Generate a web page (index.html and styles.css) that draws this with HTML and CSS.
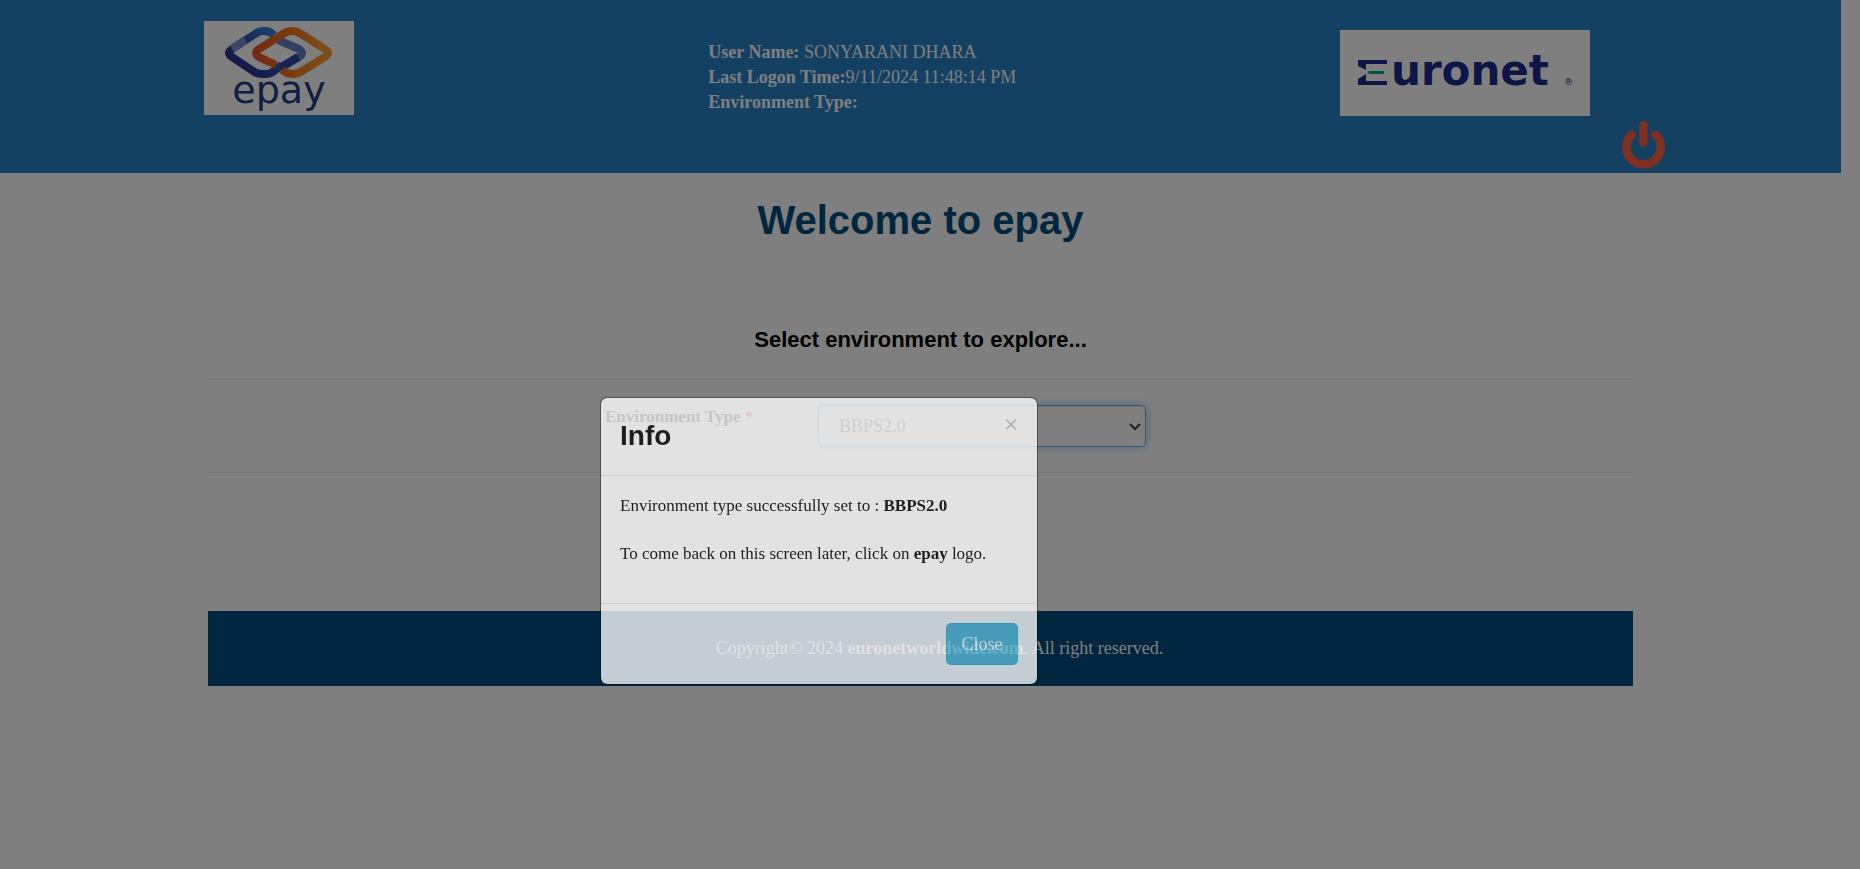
FILE: index.html
```html
<!DOCTYPE html>
<html lang="en">
<head>
<meta charset="utf-8">
<title>epay</title>
<link rel="stylesheet" href="styles.css">
</head>
<body>
<div class="page">
  <header class="header">
    <a class="logo-epay" href="#" aria-label="epay home">
      <svg width="150" height="94" viewBox="0 0 150 94">
        <defs>
          <linearGradient id="blue" x1="0" y1="1" x2="1" y2="0">
            <stop offset="0" stop-color="#24248c"/><stop offset=".45" stop-color="#2c48a4"/><stop offset="1" stop-color="#3090d8"/>
          </linearGradient>
          <linearGradient id="orange" x1="0" y1="0" x2="1" y2="0">
            <stop offset="0" stop-color="#e8502c"/><stop offset=".5" stop-color="#f07a20"/><stop offset="1" stop-color="#f8a03c"/>
          </linearGradient>
        </defs>
        <rect width="150" height="94" fill="#fff"/>
        <g fill="none" stroke-width="8">
          <path d="M70 14Q66 10 61 10H59Q55 10 51 13L28 28Q22 32 28 36L49 50Q53 53 58 53H62Q66 53 70 50L78 44" stroke="url(#blue)"/>
          <path d="M28 28 41 19" stroke="#7b91cc"/>
          <path d="M74 19 95 28Q101 32 95 36L76 47" stroke="#6482c4"/>
          <path d="M94 36 76 47" stroke="#2c48a4"/>
          <path d="M72 44 55 36Q49 32 55 28L79 13Q83 10 88 10Q93 10 97 13L121 28Q127 32 121 36L98 50Q94 53 88 53Q83 53 78 49" stroke="url(#orange)"/>
        </g>
        <text class="epay-word" x="75" y="82" text-anchor="middle">epay</text>
      </svg>
    </a>
    <div class="user">
      <div><b>User Name:</b> SONYARANI DHARA</div>
      <div><b>Last Logon Time:</b>9/11/2024 11:48:14 PM</div>
      <div><b>Environment Type:</b></div>
    </div>
    <div class="logo-euronet">
      <svg width="250" height="86" viewBox="0 0 250 86" role="img" aria-label="Euronet">
        <rect width="250" height="86" fill="#fff"/>
        <path d="M18 30H47V34H26V40L18 36ZM18 55H47V51H26V44L18 49Z" fill="#1c2c90"/>
        <path d="M27 41H44V44H30L27 43L29 42Z" fill="#00a890"/>
        <text class="euronet-word" x="51" y="55">uronet</text>
        <text class="euronet-mark" x="224" y="55">®</text>
      </svg>
    </div>
    <button class="power" aria-label="Log out">
      <svg width="43" height="48" viewBox="0 0 43 48" fill="none" stroke="currentColor" stroke-width="8.600" stroke-linecap="round">
        <path d="M21.500 4.300V21.500M9.600 13.700A17.200 17.200 0 1 0 33.400 13.700"/>
      </svg>
    </button>
  </header>
  <main class="main">
    <h1 class="title">Welcome to epay</h1>
    <h2 class="subtitle">Select environment to explore...</h2>
    <form class="env">
      <label class="env-label" for="env">Environment Type <span class="required">*</span></label>
      <div class="select-wrap">
        <select class="env-select" id="env"><option>BBPS2.0</option></select>
        <svg class="chevron" width="12" height="8" viewBox="0 0 12 8"><path d="M1 1 6 6 11 1" fill="none" stroke="currentColor" stroke-width="2"/></svg>
      </div>
    </form>
    <footer class="footer">Copyright© 2024 <b>euronetworldwide.com</b>. All right reserved.</footer>
  </main>
</div>
<div class="backdrop"></div>
<section class="modal" role="dialog" aria-labelledby="modal-title">
  <div class="modal-header">
    <h3 class="modal-title" id="modal-title">Info</h3>
    <button class="dismiss" aria-label="Dismiss">×</button>
  </div>
  <div class="modal-body">
    <p class="message">Environment type successfully set to : <b>BBPS2.0</b></p>
    <p class="message">To come back on this screen later, click on <b>epay</b> logo.</p>
  </div>
  <div class="modal-footer"><button class="close">Close</button></div>
</section>
</body>
</html>
```
FILE: styles.css
```css
* { box-sizing: border-box; }
body {
  margin: 0;
  background: #fff;
  color: #000;
  font: 18px/25px "Liberation Serif", "Times New Roman", serif;
}
.page { padding-right: 19px; }
button, select { font: inherit; }
.header {
  display: grid;
  grid-template-columns: 504fr 632fr 282fr 219fr;
  align-items: start;
  height: 173px;
  padding-left: 11.1%;
  background: #2882c4;
  color: #fff;
}
.header svg { display: block; }
.logo-epay { margin-top: 21px; }
.epay-word { font: 38px "DejaVu Sans", sans-serif; fill: #203c88; }
.user { margin-top: 40px; }
.logo-euronet { margin-top: 30px; }
.euronet-word { font: bold 42px "DejaVu Sans", sans-serif; fill: #1c2c90; }
.euronet-mark { font: 9px "DejaVu Sans", sans-serif; fill: #1c2c90; }
.power {
  justify-self: start;
  margin-top: 121px;
  padding: 0;
  border: 0;
  background: none;
  color: #fc6044;
}
.main { width: calc(100% - 416px); margin: 0 auto; }
.title, .subtitle {
  margin: 0;
  text-align: center;
  font-family: "Liberation Sans", Arial, sans-serif;
}
.title { padding-top: 23px; font-size: 40px; line-height: 48px; color: #004c80; }
.subtitle { padding-top: 81px; font-size: 22px; line-height: 30px; }
.env {
  display: grid;
  grid-template-columns: 213px 328px;
  align-items: start;
  margin-top: 24px;
  padding: 25px 0 25px 397px;
  border-top: 1px solid #eee;
  border-bottom: 1px solid #eee;
}
.env-label { font-size: 17px; line-height: 24px; font-weight: bold; }
.required { color: #f00; }
.select-wrap { position: relative; }
.env-select {
  display: block;
  width: 100%;
  height: 42px;
  padding: 0 20px;
  appearance: none;
  border: 1px solid #66afe9;
  border-radius: 5px;
  outline: 0;
  background: #fff;
  color: #555;
  box-shadow: inset 0 1px 1px rgba(0, 0, 0, .075), 0 0 8px rgba(102, 175, 233, .6);
}
.chevron { position: absolute; right: 5px; top: 18px; color: #404040; }
.footer {
  margin-top: 138px;
  padding: 25px 0 25px 38px;
  background: #004c80;
  color: #fff;
  text-align: center;
}
.backdrop { position: fixed; inset: 0; background: rgba(0, 0, 0, .5); }
.modal {
  position: fixed;
  left: 600px;
  top: 397px;
  width: 438px;
  border: 1px solid rgba(0, 0, 0, .5);
  border-radius: 7px;
  background: #fff;
  background-clip: padding-box;
  opacity: .77;
}
.modal-header {
  display: flex;
  justify-content: space-between;
  padding: 14px 19px 15px;
  border-bottom: 1px solid #e5e5e5;
}
.modal-title { margin: 0; font: bold 28px/48px "Liberation Sans", Arial, sans-serif; }
.dismiss {
  align-self: start;
  padding: 0;
  border: 0;
  background: none;
  color: #b4b4b4;
  font-size: 25px;
}
.modal-body { padding: 18px 19px 37px; font-size: 17px; line-height: 24px; }
.message { margin: 0; }
.message + .message { margin-top: 24px; }
.modal-footer {
  display: flex;
  justify-content: flex-end;
  padding: 19px;
  border-top: 1px solid #e5e5e5;
}
.close {
  width: 72px;
  height: 42px;
  padding: 0;
  border: 1px solid #46b8da;
  border-radius: 5px;
  background: #5bc0de;
  color: #fff;
}
```
